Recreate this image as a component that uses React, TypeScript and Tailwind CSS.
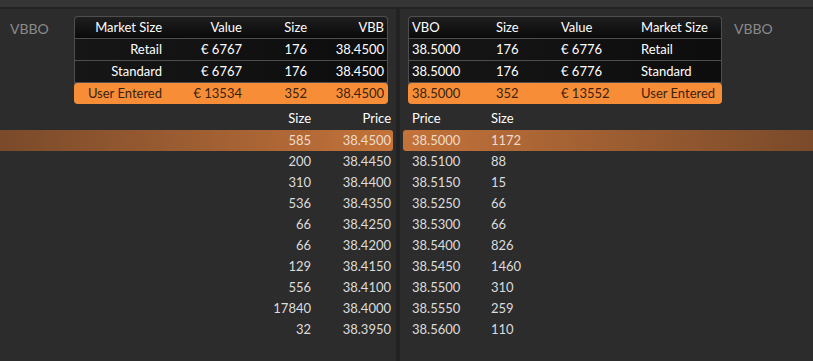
import React from "react";

const bids = [
  ["585", "38.4500"],
  ["200", "38.4450"],
  ["310", "38.4400"],
  ["536", "38.4350"],
  ["66", "38.4250"],
  ["66", "38.4200"],
  ["129", "38.4150"],
  ["556", "38.4100"],
  ["17840", "38.4000"],
  ["32", "38.3950"],
];

const asks = [
  ["38.5000", "1172"],
  ["38.5100", "88"],
  ["38.5150", "15"],
  ["38.5250", "66"],
  ["38.5300", "66"],
  ["38.5400", "826"],
  ["38.5450", "1460"],
  ["38.5500", "310"],
  ["38.5550", "259"],
  ["38.5600", "110"],
];

const bidRows = [
  ["Retail", "€ 6767", "176", "38.4500"],
  ["Standard", "€ 6767", "176", "38.4500"],
];

const askRows = [
  ["38.5000", "176", "€ 6776", "Retail"],
  ["38.5000", "176", "€ 6776", "Standard"],
];

export default function App() {
  return (
    <div
      className="w-[813px] h-[361px] overflow-hidden bg-[#2c2c2c] text-[13px] leading-none text-[#dcdcdc] flex flex-col"
      style={{ fontFamily: "Lato, 'Open Sans', sans-serif" }}
    >
      {/* top strip */}
      <div className="h-[9px] bg-[#353535] border-b-2 border-[#232323] shrink-0" />

      <div className="flex flex-1">
        {/* Bid side */}
        <div className="w-[396px] flex flex-col">
          <div className="flex pt-[7px] pl-[10px]">
            <div className="w-[64px] pt-[6px] text-[14px] text-[#8a8a8a]">VBBO</div>
            <div className="w-[314px] rounded-[4px] bg-[#4e4e4e] p-[1px] flex flex-col gap-[1px]">
              <div className="h-[21px] flex items-center text-right text-white rounded-t-[3px] bg-gradient-to-b from-[#1f1f1f] to-[#0a0a0a]">
                <div className="w-[87px]">Market Size</div>
                <div className="w-[80px]">Value</div>
                <div className="w-[65px]">Size</div>
                <div className="w-[77px]">VBB</div>
              </div>
              {bidRows.map((r) => (
                <div key={r[0]} className="h-[21px] flex items-center text-right text-white bg-gradient-to-r from-[#161616] to-[#0d0d0d]">
                  <div className="w-[87px]">{r[0]}</div>
                  <div className="w-[80px]">{r[1]}</div>
                  <div className="w-[65px]">{r[2]}</div>
                  <div className="w-[77px]">{r[3]}</div>
                </div>
              ))}
              <div className="h-[21px] -mx-[1px] -mb-[1px] flex items-center text-right text-[#3a2210] bg-[#f88d37] rounded-[4px]">
                <div className="w-[88px]">User Entered</div>
                <div className="w-[80px]">€ 13534</div>
                <div className="w-[65px]">352</div>
                <div className="w-[77px]">38.4500</div>
              </div>
            </div>
          </div>

          <div className="h-[26px] flex items-center justify-end pr-[5px] pt-[2px] text-white">
            <div className="w-[60px] text-right">Size</div>
            <div className="w-[80px] text-right">Price</div>
          </div>

          <div className="flex flex-col">
            {bids.map((b, i) => (
              <div
                key={i}
                className={
                  i === 0
                    ? "h-[21px] mr-[3px] flex items-center justify-end pr-[2px] rounded-r-[3px] bg-gradient-to-r from-[#7a4a2a] to-[#c4733a] text-[#eedccc]"
                    : "h-[21px] mr-[3px] flex items-center justify-end pr-[2px] border-b border-[#2e2e2e]"
                }
              >
                <div className="w-[60px] text-right">{b[0]}</div>
                <div className="w-[80px] text-right">{b[1]}</div>
              </div>
            ))}
          </div>
        </div>

        {/* divider */}
        <div className="w-[4px] bg-[#222222] shrink-0" />

        {/* Ask side */}
        <div className="flex-1 flex flex-col">
          <div className="flex pt-[7px] pl-[8px]">
            <div className="w-[314px] rounded-[4px] bg-[#4e4e4e] p-[1px] flex flex-col gap-[1px]">
              <div className="h-[21px] flex items-center pl-[3px] text-white rounded-t-[3px] bg-gradient-to-b from-[#1f1f1f] to-[#0a0a0a]">
                <div className="w-[84px]">VBO</div>
                <div className="w-[65px]">Size</div>
                <div className="w-[80px]">Value</div>
                <div>Market Size</div>
              </div>
              {askRows.map((r) => (
                <div key={r[3]} className="h-[21px] flex items-center pl-[3px] text-white bg-gradient-to-r from-[#161616] to-[#0d0d0d]">
                  <div className="w-[84px]">{r[0]}</div>
                  <div className="w-[65px]">{r[1]}</div>
                  <div className="w-[80px]">{r[2]}</div>
                  <div>{r[3]}</div>
                </div>
              ))}
              <div className="h-[21px] -mx-[1px] -mb-[1px] flex items-center pl-[4px] text-[#3a2210] bg-[#f88d37] rounded-[4px]">
                <div className="w-[84px]">38.5000</div>
                <div className="w-[65px]">352</div>
                <div className="w-[80px]">€ 13552</div>
                <div>User Entered</div>
              </div>
            </div>
            <div className="pl-[12px] pt-[6px] text-[14px] text-[#8a8a8a]">VBBO</div>
          </div>

          <div className="h-[26px] flex items-center pl-[12px] pt-[2px] text-white">
            <div className="w-[79px]">Price</div>
            <div>Size</div>
          </div>

          <div className="flex flex-col">
            {asks.map((a, i) => (
              <div
                key={i}
                className={
                  i === 0
                    ? "h-[21px] ml-[3px] flex items-center pl-[9px] rounded-l-[3px] bg-gradient-to-r from-[#c4733a] to-[#7a4a2a] text-[#eedccc]"
                    : "h-[21px] ml-[3px] flex items-center pl-[9px] border-b border-[#2e2e2e]"
                }
              >
                <div className="w-[79px]">{a[0]}</div>
                <div>{a[1]}</div>
              </div>
            ))}
          </div>
        </div>
      </div>
    </div>
  );
}
